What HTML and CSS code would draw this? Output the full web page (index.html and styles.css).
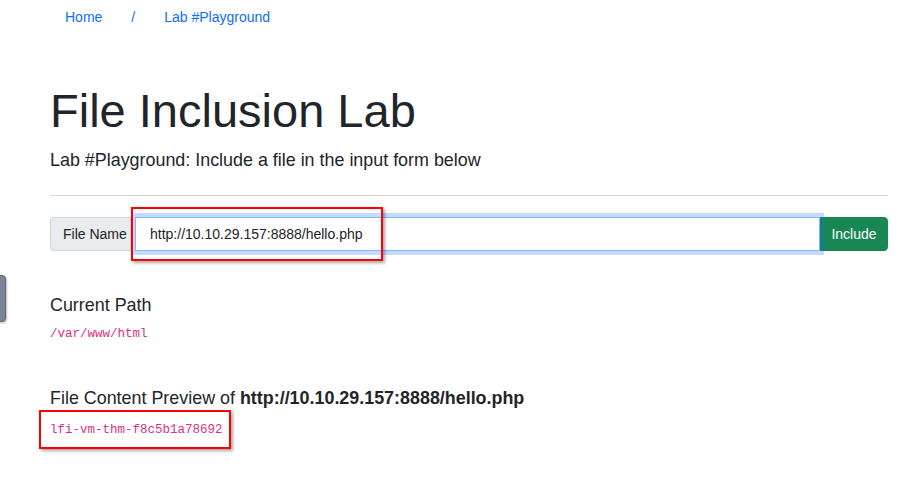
FILE: index.html
```html
<!DOCTYPE html>
<html lang="en">
<head>
<meta charset="utf-8">
<title>File Inclusion Lab</title>
<link rel="stylesheet" href="styles.css">
</head>
<body>
<div class="side-tab"></div>
<nav class="crumbs">
  <a class="crumb" href="#">Home</a>
  <span class="crumb">/</span>
  <a class="crumb" href="#">Lab #Playground</a>
</nav>
<main class="container">
  <h1 class="title">File Inclusion Lab</h1>
  <p class="lead">Lab #Playground: Include a file in the input form below</p>
  <hr class="rule">
  <form class="input-group">
    <span class="group-label">File Name</span>
    <input class="group-input" type="text" value="http://10.10.29.157:8888/hello.php">
    <button class="group-btn" type="button">Include</button>
    <span class="mark mark-input"></span>
  </form>
  <h5 class="section">Current Path</h5>
  <code class="code">/var/www/html</code>
  <h5 class="section section-preview">File Content Preview of <b>http://10.10.29.157:8888/hello.php</b></h5>
  <div class="code-wrap">
    <code class="code">lfi-vm-thm-f8c5b1a78692</code>
    <span class="mark mark-code"></span>
  </div>
</main>
</body>
</html>
```
FILE: styles.css
```css
* { box-sizing: border-box; }
html, body { margin: 0; padding: 0; background: #fff; }
body {
  font-family: "Liberation Sans", Arial, sans-serif;
  color: #212529;
  position: relative;
  min-height: 478px;
}
.side-tab {
  position: absolute;
  left: -6px;
  top: 275px;
  width: 12px;
  height: 47px;
  background: #7b8496;
  border: 1px solid #5f6676;
  border-radius: 4px;
  box-shadow: 1px 1px 2px rgba(0,0,0,.25);
}
.crumbs {
  display: flex;
  padding: 7px 0 0 50px;
  font-size: 14px;
  line-height: 21px;
}
.crumb {
  color: #0d6efd;
  text-decoration: none;
  padding: 0 14px 0 15px;
}
.container {
  width: 838px;
  margin-left: 50px;
  position: relative;
}
.title {
  margin: 54.5px 0 0;
  font-size: 47px;
  font-weight: 400;
  line-height: 1.2;
}
.lead {
  margin: 8px 0 0;
  font-size: 17.9px;
  line-height: 27px;
}
.rule {
  margin: 21px 0 0;
  border: 0;
  border-top: 1px solid #d3d4d5;
  height: 0;
}
.input-group {
  margin: 21px 0 0;
  display: flex;
  height: 34px;
  position: relative;
  font-size: 14px;
}
.group-label {
  flex: none;
  display: flex;
  align-items: center;
  white-space: nowrap;
  padding: 0 12px;
  background: #e9ecef;
  border: 1px solid #ced4da;
  border-radius: 4px 0 0 4px;
  color: #212529;
  width: 81px;
}
.group-input {
  flex: 1;
  min-width: 0;
  margin-left: 4px;
  height: 34px;
  padding: 0 12px 0 14px;
  font: inherit;
  color: #212529;
  border: 1px solid #86b7fe;
  box-shadow: 0 0 0 4px rgba(13,110,253,.25);
  outline: none;
  border-radius: 0;
  position: relative;
  z-index: 1;
}
.group-btn {
  flex: none;
  width: 68px;
  height: 34px;
  background: #198754;
  color: #fff;
  border: 1px solid #198754;
  border-radius: 0 4px 4px 0;
  font: inherit;
  padding: 0;
}
.mark {
  position: absolute;
  border: 2px solid #ff0000;
  box-shadow: 2px 2px 3px rgba(0,0,0,.35);
  z-index: 3;
  pointer-events: none;
}
.mark-input {
  left: 81px;
  top: -10px;
  width: 252px;
  height: 54px;
}
.section {
  margin: 44px 0 0;
  font-size: 17.9px;
  font-weight: 400;
  line-height: 1.2;
}
.section b { font-weight: 700; }
.code {
  display: block;
  margin-top: 8px;
  font-family: "Liberation Mono", "Courier New", monospace;
  font-size: 12.5px;
  line-height: 20px;
  color: #d63384;
}
.section-preview { margin-top: 44px; }
.code-wrap {
  position: relative;
  margin-top: 10px;
}
.code-wrap .code { margin-top: 0; }
.mark-code {
  left: -11px;
  top: -10px;
  width: 192px;
  height: 39px;
}
```
